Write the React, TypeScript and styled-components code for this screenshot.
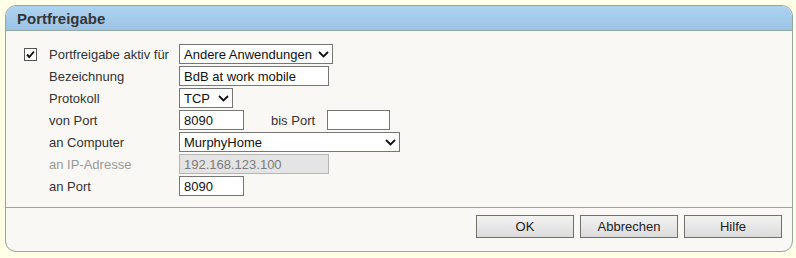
import React from "react";
import styled, { createGlobalStyle } from "styled-components";

const Global = createGlobalStyle`
  html, body { margin: 0; padding: 0; background: #ffffe7; }
  body { font-family: "Liberation Sans", Arial, sans-serif; font-size: 13px; color: #333; }
  * { box-sizing: border-box; }
`;

const Page = styled.div`
  padding: 5px 3px 5px 5px;
`;

const Panel = styled.section`
  border: 1px solid #94a7a3;
  border-radius: 11px;
  background: #f9f8f4;
  overflow: hidden;
`;

const Header = styled.header`
  height: 25px;
  background: linear-gradient(#aed3f1, #9cc3e5);
  border-bottom: 1px solid #94a7a3;
  display: flex;
  align-items: center;
  padding-left: 11px;
  font-size: 15px;
  font-weight: bold;
  color: #363636;
`;

const Form = styled.div`
  display: grid;
  grid-template-columns: 25px 130px 1fr;
  grid-auto-rows: 22px;
  align-items: center;
  padding: 12px 0 10px 18px;
  border-bottom: 1px solid #94a7a3;
`;

const Label = styled.span<{ $disabled?: boolean }>`
  grid-column: 2;
  color: ${(p) => (p.$disabled ? "#9a9a9a" : "#333")};
  white-space: nowrap;
`;

const Cell = styled.div`
  grid-column: 3;
  display: flex;
  align-items: center;
`;

const CheckWrap = styled.label`
  grid-column: 1;
  position: relative;
  width: 13px;
  height: 13px;
  display: block;
`;

const CheckInput = styled.input`
  appearance: none;
  margin: 0;
  width: 13px;
  height: 13px;
  border: 1px solid #555;
  background: #fff;
  display: block;
`;

const CheckMark = styled.svg`
  position: absolute;
  left: 1px;
  top: 1px;
  pointer-events: none;
`;

const TextInput = styled.input<{ $w: number }>`
  width: ${(p) => p.$w}px;
  height: 20px;
  border: 1px solid #767676;
  background: #fff;
  padding: 0 4px;
  font: inherit;
  font-size: 13px;
  color: #111;
  outline: none;
  &:disabled {
    background: #e4e4e4;
    border-color: #b5b5b5;
    color: #7c7c7c;
  }
`;

const SelectWrap = styled.div<{ $w: number }>`
  position: relative;
  width: ${(p) => p.$w}px;
  height: 20px;
`;

const Select = styled.select`
  appearance: none;
  width: 100%;
  height: 100%;
  border: 1px solid #767676;
  border-radius: 0;
  background: #fff;
  padding: 0 4px;
  font: inherit;
  font-size: 13px;
  color: #111;
  outline: none;
`;

const Chevron = styled.svg`
  position: absolute;
  right: 4px;
  top: 7px;
  pointer-events: none;
`;

const InlineLabel = styled.span`
  margin: 0 12px 0 27px;
  color: #333;
`;

const Footer = styled.div`
  display: flex;
  justify-content: flex-end;
  gap: 6px;
  padding: 7px 10px 13px;
`;

const Button = styled.button`
  width: 98px;
  height: 23px;
  border: 1px solid #707070;
  border-radius: 0;
  background: linear-gradient(#f2f2f2, #dcdcdc);
  font: inherit;
  font-size: 13px;
  color: #222;
  padding: 0;
`;

const Arrow = () => (
  <Chevron width="11" height="7" viewBox="0 0 11 7">
    <path d="M1 1 L5.5 5.5 L10 1" fill="none" stroke="#111" strokeWidth="1.8" />
  </Chevron>
);

export default function App() {
  return (
    <Page>
      <Global />
      <Panel>
        <Header>Portfreigabe</Header>
        <Form>
          <CheckWrap>
            <CheckInput type="checkbox" defaultChecked />
            <CheckMark width="11" height="11" viewBox="0 0 11 11">
              <path d="M2 5.5 L4.3 8 L9 2.5" fill="none" stroke="#111" strokeWidth="1.9" />
            </CheckMark>
          </CheckWrap>
          <Label>Portfreigabe aktiv für</Label>
          <Cell>
            <SelectWrap $w={154}>
              <Select defaultValue="a">
                <option value="a">Andere Anwendungen</option>
              </Select>
              <Arrow />
            </SelectWrap>
          </Cell>

          <Label>Bezeichnung</Label>
          <Cell>
            <TextInput $w={150} defaultValue="BdB at work mobile" />
          </Cell>

          <Label>Protokoll</Label>
          <Cell>
            <SelectWrap $w={54}>
              <Select defaultValue="tcp">
                <option value="tcp">TCP</option>
                <option value="udp">UDP</option>
              </Select>
              <Arrow />
            </SelectWrap>
          </Cell>

          <Label>von Port</Label>
          <Cell>
            <TextInput $w={65} defaultValue="8090" />
            <InlineLabel>bis Port</InlineLabel>
            <TextInput $w={63} defaultValue="" />
          </Cell>

          <Label>an Computer</Label>
          <Cell>
            <SelectWrap $w={221}>
              <Select defaultValue="m">
                <option value="m">MurphyHome</option>
              </Select>
              <Arrow />
            </SelectWrap>
          </Cell>

          <Label $disabled>an IP-Adresse</Label>
          <Cell>
            <TextInput $w={150} defaultValue="192.168.123.100" disabled />
          </Cell>

          <Label>an Port</Label>
          <Cell>
            <TextInput $w={65} defaultValue="8090" />
          </Cell>
        </Form>
        <Footer>
          <Button>OK</Button>
          <Button>Abbrechen</Button>
          <Button>Hilfe</Button>
        </Footer>
      </Panel>
    </Page>
  );
}
